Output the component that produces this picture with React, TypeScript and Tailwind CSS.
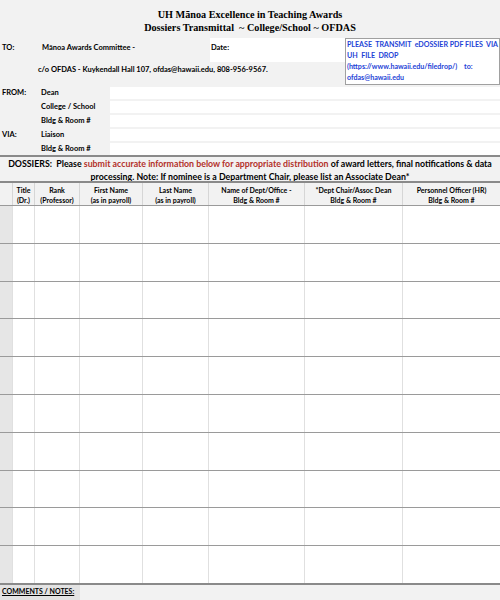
const cols = ['w-[13px]', 'w-[22px]', 'w-[45px]', 'w-[63px]', 'w-[66px]', 'w-[96px]', 'w-[98px]', 'flex-1'];

const headers: [string, string][] = [
  ['', ''],
  ['Title', '(Dr.)'],
  ['Rank', '(Professor)'],
  ['First Name', '(as in payroll)'],
  ['Last Name', '(as in payroll)'],
  ['Name of Dept/Office -', 'Bldg & Room #'],
  ['*Dept Chair/Assoc Dean', 'Bldg & Room #'],
  ['Personnel Officer (HR)', 'Bldg & Room #'],
];

const fromRows = [
  ['FROM:', 'Dean'],
  ['', 'College / School'],
  ['', 'Bldg & Room #'],
  ['VIA:', 'Liaison'],
  ['', 'Bldg & Room #'],
];

const rows = Array.from({ length: 10 }, (_, i) => i);

export default function App() {
  return (
    <div className="w-[500px] h-[600px] bg-[#f2f2f2] overflow-hidden text-black font-['Lato','Open_Sans',sans-serif] flex flex-col">
      <div className="pt-[8px] h-[38px] text-center font-['Liberation_Serif',serif] font-bold text-[10.2px] leading-[13px]">
        <div>UH Mānoa Excellence in Teaching Awards</div>
        <div>Dossiers Transmittal&nbsp; ~ College/School ~ OFDAS</div>
      </div>

      <div className="flex h-[47px]">
        <div className="w-[346px] flex flex-col">
          <div className="flex h-[24px]">
            <div className="w-[42px] pl-[2px] pt-[4px] text-[7.5px] font-bold">TO:</div>
            <div className="w-[168px] pt-[4px] text-[7.5px] font-bold">Mānoa Awards Committee -</div>
            <div className="flex-1 bg-white pl-[1px] pt-[4px] text-[7.5px] font-bold">Date:</div>
          </div>
          <div className="pl-[38px] pt-[2px] text-[7.5px] font-bold whitespace-nowrap">
            c/o OFDAS - Kuykendall Hall 107, ofdas@hawaii.edu, 808-956-9567.
          </div>
        </div>
        <div className="flex-1 bg-white border border-[#a0a0a0] px-[1px] text-[7.1px] leading-[11px] font-bold text-[#1d3fd6] whitespace-nowrap">
          <div>PLEASE&nbsp; TRANSMIT&nbsp; eDOSSIER PDF FILES&nbsp; VIA</div>
          <div>UH&nbsp; FILE&nbsp; DROP</div>
          <div>(https://www.hawaii.edu/filedrop/)&nbsp;&nbsp;&nbsp; to:</div>
          <div>ofdas@hawaii.edu</div>
        </div>
      </div>

      <div className="flex flex-col gap-[2px] pt-[2px] h-[70px]">
        {fromRows.map(([a, b], i) => (
          <div key={i} className="flex h-[12px] items-center text-[7.5px] font-bold">
            <div className="w-[41px] pl-[2px]">{a}</div>
            <div className="w-[69px]">{b}</div>
            <div className="flex-1 h-full bg-white" />
          </div>
        ))}
      </div>

      <div className="border-t-2 border-[#8a8a8a] h-[26px] pt-[1px] text-center text-[8.8px] leading-[12.5px] font-bold whitespace-nowrap">
        <div>
          DOSSIERS:&nbsp; Please <span className="text-[#b3302a]">submit accurate information below for appropriate distribution</span> of award letters, final notifications &amp; data
        </div>
        <div>processing. Note: If nominee is a Department Chair, please list an Associate Dean*</div>
      </div>

      <div className="border-t-2 border-[#8a8a8a] flex h-[24px]">
        {headers.map(([a, b], i) => (
          <div
            key={i}
            className={`${cols[i]} border-r border-[#d6d6d6] last:border-r-0 flex flex-col items-center pt-[2px] text-[7px] leading-[10px] font-bold whitespace-nowrap`}
          >
            <div>{a}</div>
            <div>{b}</div>
          </div>
        ))}
      </div>

      {rows.map((r) => (
        <div key={r} className="flex h-[37.8px] border-t-[1.5px] border-[#9a9a9a] first:border-[#c8c8c8]">
          {cols.map((c, i) => (
            <div
              key={i}
              className={`${c} border-r border-[#e0e0e0] last:border-r-0 ${i === 0 ? 'bg-[#e6e6e6]' : 'bg-white'}`}
            />
          ))}
        </div>
      ))}

      <div className="border-t-2 border-[#8a8a8a] flex-1">
        <div className="w-[80px] h-full bg-[#e3e3e3] pl-[2px] pt-[1px] text-[7px] font-bold underline">
          COMMENTS / NOTES:
        </div>
      </div>
    </div>
  );
}
